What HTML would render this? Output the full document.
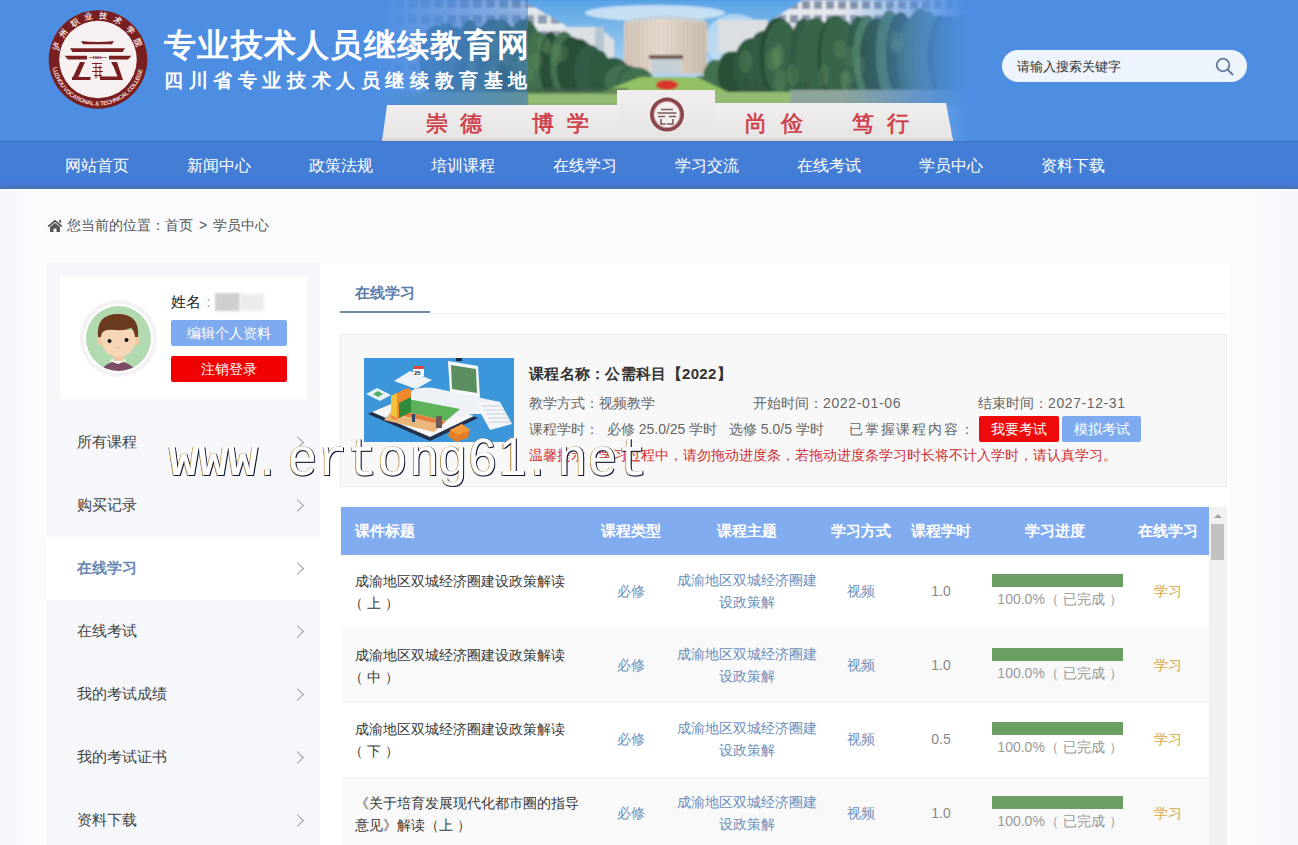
<!DOCTYPE html>
<html><head><meta charset="utf-8">
<style>
*{margin:0;padding:0;box-sizing:border-box}
html,body{text-spacing-trim:space-all;width:1298px;height:845px;overflow:hidden;font-family:"Liberation Sans",sans-serif;background:linear-gradient(90deg,#f6f8fc 0,#fafbfd 40px,#fafbfd 1240px,#f6f8fc 1298px);color:#333}
.abs{position:absolute}
#hdr{position:absolute;left:0;top:0;width:1298px;height:142px;background:#4d8ee3;overflow:hidden}
#nav{position:absolute;left:0;top:141px;width:1298px;height:48px;background:linear-gradient(#437dd6 0,#437dd6 76%,#437bdb 80%,#447ad8 87%,#4773c0 96%,#4d6fae 100%);border-top:1px solid #3a71c8}
#nav span{position:absolute;top:14px;color:#fff;font-size:16px;width:122px;text-align:center;line-height:20px}
.title{position:absolute;left:164px;top:25px;color:#fff;font-size:32px;font-weight:bold;letter-spacing:1.3px;line-height:40px;white-space:nowrap}
.sub{position:absolute;left:164px;top:68px;color:#fff;font-size:19px;font-weight:bold;letter-spacing:5.6px;line-height:26px;white-space:nowrap}
#search{position:absolute;left:1002px;top:50px;width:245px;height:32px;border-radius:16px;background:#eef4fc}
#search span{position:absolute;left:15px;top:9px;font-size:13px;color:#333;line-height:15px}
#crumb{position:absolute;left:67px;top:217px;font-size:14px;color:#555;line-height:17px;white-space:nowrap}
#side{position:absolute;left:47px;top:263px;width:273px;height:600px;background:#f5f7fb}
#card{position:absolute;left:13px;top:13px;width:247px;height:123px;background:#fff}
.menu{position:absolute;left:0;width:273px;height:63px}
.menu span{position:absolute;left:30px;top:22px;font-size:15px;color:#444;line-height:17px}
.menu i{position:absolute;left:246px;top:27px;width:9px;height:9px;border-right:1px solid #999;border-top:1px solid #999;transform:rotate(45deg)}
.menu.act{background:#fff}
.menu.act span{color:#6887b2;font-weight:bold}

#avatar{position:absolute;left:80px;top:300px;width:77px;height:77px;border-radius:50%;background:#fff;box-shadow:0 0 0 1px #f3eef3 inset}
.btn{position:absolute;height:26px;border-radius:2px;color:#fff;font-size:14px;text-align:center;line-height:26px}
#tab{position:absolute;left:355px;top:284px;font-size:15px;font-weight:bold;color:#5b7dab;line-height:18px}
#tabline{position:absolute;left:340px;top:310.5px;width:90px;height:2.5px;background:#6f8aa0}
#tabrule{position:absolute;left:430px;top:313px;width:797px;height:1px;background:#eeeff1}
#cbox{position:absolute;left:340px;top:334px;width:887px;height:153px;background:#f8f8f8;border:1px solid #ececec}
.ct{position:absolute;white-space:nowrap;font-size:14px;color:#666;line-height:16px}
#tbl{position:absolute;left:341px;top:507px;width:868px;height:340px;overflow:hidden}
#thead{position:absolute;left:0;top:0;width:868px;height:48px;background:#81acf0}
.th{position:absolute;top:15px;font-size:15px;font-weight:bold;color:#fff;line-height:18px;white-space:nowrap;text-align:center}
.row{position:absolute;left:0;width:868px;height:74px;background:#fff}
.row.g{background:#f9f9f9}
.td{position:absolute;font-size:14px;line-height:22px;white-space:nowrap;text-align:center}
.t1{left:14px;top:15px;color:#3a3a3a;text-align:left}
.t2{left:260px;width:60px;top:25px;color:#6d8fbd}
.t3{left:326px;width:160px;top:14px;color:#6d8fbd}
.t4{left:490px;width:60px;top:25px;color:#6d8fbd}
.t5{left:570px;width:60px;top:25px;color:#888}
.bar{position:absolute;left:651px;top:19px;width:131px;height:13px;background:#6a9e62}
.t6{left:644px;width:150px;top:33px;color:#999}
.t7{left:798px;width:58px;top:25px;color:#dba442}
#sb{position:absolute;left:1209px;top:507px;width:18px;height:340px;background:#f1f1f1}
#wm .c{display:inline-block;width:30.01px;font-family:"Liberation Sans",sans-serif}
#wm{position:absolute;left:169px;top:428px;font-family:"Liberation Mono",monospace;font-size:50px;color:#fff;white-space:nowrap;line-height:60px;text-shadow:1px 1px 0 #0a1430,-0.8px -0.8px 0 #d2a45a,0.8px -0.8px 0 #444,-0.8px 0.8px 0 #555;transform-origin:0 42px;transform:scaleY(1.08)}
</style></head><body>
<div id="hdr">
  <svg class="abs" style="left:0;top:0" width="1298" height="141" viewBox="0 0 1298 141">
    <defs>
      <linearGradient id="fadeR" x1="840" x2="968" y1="0" y2="0" gradientUnits="userSpaceOnUse">
        <stop offset="0" stop-color="#4d8ee3" stop-opacity="0"/>
        <stop offset="0.3" stop-color="#4d8ee3" stop-opacity="0.3"/>
        <stop offset="0.65" stop-color="#4d8ee3" stop-opacity="0.7"/>
        <stop offset="1" stop-color="#4d8ee3" stop-opacity="1"/>
      </linearGradient>
      <linearGradient id="fadeLb" x1="378" x2="528" y1="0" y2="0" gradientUnits="userSpaceOnUse">
        <stop offset="0" stop-color="#4d8ee3" stop-opacity="1"/>
        <stop offset="0.3" stop-color="#4a8ade" stop-opacity="0.85"/>
        <stop offset="0.7" stop-color="#4282d8" stop-opacity="0.65"/>
        <stop offset="1" stop-color="#3d7bd0" stop-opacity="0.5"/>
      </linearGradient>
      <linearGradient id="sky" x1="0" x2="0" y1="0" y2="1">
        <stop offset="0" stop-color="#58a3e4"/><stop offset="0.45" stop-color="#a6d0f0"/><stop offset="1" stop-color="#d6e8f5"/>
      </linearGradient>
      <linearGradient id="rb" x1="0" x2="1"><stop offset="0" stop-color="#c7b6a6"/><stop offset="0.45" stop-color="#ebe1d6"/><stop offset="1" stop-color="#b8a592"/></linearGradient>
      <linearGradient id="wall" x1="0" x2="0" y1="0" y2="1"><stop offset="0" stop-color="#f0eeee"/><stop offset="1" stop-color="#e6e3e3"/></linearGradient>
      <linearGradient id="treeG" x1="0" x2="0" y1="0" y2="1"><stop offset="0" stop-color="#4d7d55"/><stop offset="1" stop-color="#335c45"/></linearGradient>
      <pattern id="win" width="13" height="16" patternUnits="userSpaceOnUse" x="380" y="-4"><rect width="13" height="16" fill="#e2e6eb"/><rect x="2" y="3" width="9" height="9" fill="#8f9db0"/><rect x="0" y="12" width="13" height="2" fill="#f3f5f7"/></pattern>
      <pattern id="win2" width="12" height="14" patternUnits="userSpaceOnUse" x="764" y="-2"><rect width="12" height="14" fill="#e5e8ec"/><rect x="2" y="3" width="8" height="8" fill="#8693a6"/></pattern>
      <pattern id="vst" width="4" height="6" patternUnits="userSpaceOnUse"><rect x="0" width="3" height="6" fill="#e8ddd1" opacity="0.5"/><rect x="3" width="1" height="6" fill="#a89584" opacity="0.45"/></pattern>
      <filter id="bl" x="-5%" y="-5%" width="110%" height="110%"><feGaussianBlur stdDeviation="1.3"/></filter>
      <clipPath id="pc"><rect x="360" y="0" width="620" height="141"/></clipPath>
      <filter id="bl2"><feGaussianBlur stdDeviation="0.6"/></filter>
    </defs>
    <g clip-path="url(#pc)"><g filter="url(#bl)">
      <rect x="375" y="0" width="600" height="141" fill="url(#sky)"/>
      <ellipse cx="655" cy="13" rx="70" ry="8" fill="#e6f0f8" opacity="0.75"/>
      <ellipse cx="735" cy="40" rx="30" ry="26" fill="#cfe3f3" opacity="0.7"/>
      <polygon points="375,0 522,0 566,26 566,80 375,80" fill="url(#win)"/>
      <polygon points="565,27 598,27 614,40 614,72 565,72" fill="#dcdfe3"/>
      <rect x="595" y="27" width="9" height="40" fill="#b4c6d2"/>
      <path d="M624,22 Q665,12 707,22 L707,74 L624,74Z" fill="url(#rb)"/>
      <path d="M624,22 Q665,12 707,22 L707,74 L624,74Z" fill="url(#vst)"/>
      <path d="M626,20 Q665,11 705,20 L705,23 Q665,15 626,23Z" fill="#c3d0d8"/>
      <rect x="718" y="20" width="50" height="32" fill="#dcdfe2"/>
      <polygon points="764,25 803,0 975,0 975,40 764,40" fill="url(#win2)"/>
      <rect x="651" y="58" width="30" height="16" fill="#c5d0d6"/>
      <rect x="649" y="55" width="34" height="4" fill="#6e5248"/>
      <g><polygon points="430,97 430,32.0 435,32.0 440,32.0 445,32.0 450,32.0 455,32.0 460,32.0 465,32.0 470,32.0 475,32.0 480,32.0 485,32.0 490,32.0 495,32.0 500,32.0 505,32.0 510,32.0 515,32.0 520,32.0 525,32.0 530,36.4 535,37.4 540,38.4 545,39.4 550,40.4 555,41.4 560,44.0 565,46.0 570,48.0 575,50.0 580,52.0 585,54.0 590,56.0 595,58.0 600,62.0 605,63.8 610,65.5 615,67.2 620,69.0 625,70.8 630,72.5 635,74.2 640,76.0 645,77.8 645,97" fill="#345e46"/><polygon points="700,97 700,82.0 705,78.5 710,75.0 715,71.5 720,68.0 725,64.5 730,61.0 735,57.5 740,54.0 745,51.0 750,48.0 755,45.0 760,42.0 765,39.0 770,36.0 775,33.0 780,30.0 785,29.8 790,29.5 795,29.2 800,29.0 805,28.8 810,28.5 815,28.2 820,28.0 825,27.8 830,27.5 835,27.2 840,27.0 845,26.8 850,26.5 855,26.2 860,26.0 865,25.8 870,25.5 875,25.2 880,25.0 885,24.8 890,24.5 895,24.2 900,24.0 905,23.8 910,23.5 915,23.2 920,23.0 925,22.8 930,22.5 935,22.2 940,22.0 945,21.8 950,21.5 955,21.2 960,21.0 965,20.8 965,97" fill="#345e46"/><ellipse cx="436.1" cy="60.7" rx="17.4" ry="36.3" fill="#2b5039"/><ellipse cx="446.1" cy="59.7" rx="17.7" ry="37.3" fill="#39654a"/><ellipse cx="455.9" cy="61.5" rx="11.9" ry="35.5" fill="#325c45"/><ellipse cx="467.8" cy="58.9" rx="11.8" ry="38.1" fill="#39654a"/><ellipse cx="469.2" cy="58.1" rx="13.2" ry="38.9" fill="#325c45"/><ellipse cx="480.4" cy="61.0" rx="12.1" ry="36.0" fill="#4b7a55"/><ellipse cx="493.0" cy="57.7" rx="18.8" ry="39.3" fill="#2f5a40"/><ellipse cx="500.5" cy="58.1" rx="18.9" ry="38.9" fill="#39654a"/><ellipse cx="511.0" cy="61.8" rx="15.3" ry="35.2" fill="#2b5039"/><ellipse cx="524.1" cy="57.9" rx="18.7" ry="39.1" fill="#39654a"/><ellipse cx="537.2" cy="64.4" rx="13.4" ry="32.6" fill="#437150"/><ellipse cx="541.6" cy="65.0" rx="13.1" ry="32.0" fill="#437150"/><ellipse cx="550.2" cy="64.2" rx="11.0" ry="32.8" fill="#2b5039"/><ellipse cx="564.0" cy="64.1" rx="13.8" ry="32.9" fill="#437150"/><ellipse cx="571.5" cy="66.9" rx="14.8" ry="30.1" fill="#2b5039"/><ellipse cx="578.3" cy="67.9" rx="18.5" ry="29.1" fill="#2b5039"/><ellipse cx="589.9" cy="71.0" rx="15.4" ry="26.0" fill="#325c45"/><ellipse cx="599.7" cy="73.8" rx="11.1" ry="23.2" fill="#2f5a40"/><ellipse cx="612.8" cy="77.4" rx="18.6" ry="19.6" fill="#2f5a40"/><ellipse cx="623.1" cy="80.7" rx="18.5" ry="16.3" fill="#437150"/><ellipse cx="630.5" cy="81.8" rx="13.0" ry="15.2" fill="#325c45"/><ellipse cx="636.3" cy="82.1" rx="17.4" ry="14.9" fill="#437150"/><ellipse cx="700.4" cy="86.6" rx="11.7" ry="10.4" fill="#437150"/><ellipse cx="715.4" cy="78.4" rx="12.2" ry="18.6" fill="#437150"/><ellipse cx="729.8" cy="74.3" rx="13.5" ry="22.7" fill="#437150"/><ellipse cx="733.7" cy="74.2" rx="16.0" ry="22.8" fill="#2b5039"/><ellipse cx="747.8" cy="70.6" rx="12.3" ry="26.4" fill="#2f5a40"/><ellipse cx="751.8" cy="67.5" rx="18.4" ry="29.5" fill="#2f5a40"/><ellipse cx="763.6" cy="63.9" rx="17.6" ry="33.1" fill="#325c45"/><ellipse cx="778.0" cy="57.3" rx="18.8" ry="39.7" fill="#2b5039"/><ellipse cx="781.9" cy="58.4" rx="17.7" ry="38.6" fill="#39654a"/><ellipse cx="801.7" cy="58.3" rx="12.1" ry="38.7" fill="#325c45"/><ellipse cx="803.0" cy="57.6" rx="12.2" ry="39.4" fill="#325c45"/><ellipse cx="815.1" cy="57.4" rx="19.0" ry="39.6" fill="#39654a"/><ellipse cx="832.3" cy="57.0" rx="14.9" ry="40.0" fill="#2b5039"/><ellipse cx="835.7" cy="56.0" rx="14.8" ry="41.0" fill="#39654a"/><ellipse cx="843.8" cy="58.5" rx="15.3" ry="38.5" fill="#39654a"/><ellipse cx="859.3" cy="56.5" rx="13.7" ry="40.5" fill="#2f5a40"/><ellipse cx="868.1" cy="56.4" rx="15.4" ry="40.6" fill="#4b7a55"/><ellipse cx="877.0" cy="57.5" rx="17.2" ry="39.5" fill="#2b5039"/><ellipse cx="889.4" cy="53.4" rx="13.4" ry="43.6" fill="#4b7a55"/><ellipse cx="900.8" cy="54.4" rx="14.9" ry="42.6" fill="#2b5039"/><ellipse cx="911.1" cy="57.5" rx="13.7" ry="39.5" fill="#39654a"/><ellipse cx="920.0" cy="52.6" rx="15.4" ry="44.4" fill="#437150"/><ellipse cx="927.6" cy="53.7" rx="13.3" ry="43.3" fill="#4b7a55"/><ellipse cx="941.0" cy="56.0" rx="13.8" ry="41.0" fill="#2b5039"/><ellipse cx="948.1" cy="56.5" rx="14.3" ry="40.5" fill="#39654a"/><ellipse cx="963.7" cy="54.8" rx="18.8" ry="42.2" fill="#437150"/></g><g><ellipse cx="543.6" cy="44.3" rx="6.6" ry="8.8" fill="#6a9462" opacity="0.3"/><ellipse cx="839.8" cy="49.2" rx="6.6" ry="9.8" fill="#6a9462" opacity="0.3"/><ellipse cx="494.1" cy="42.5" rx="6.0" ry="9.2" fill="#6a9462" opacity="0.3"/><ellipse cx="483.8" cy="81.4" rx="4.5" ry="11.9" fill="#6a9462" opacity="0.3"/><ellipse cx="523.1" cy="62.7" rx="6.7" ry="8.2" fill="#6a9462" opacity="0.3"/><ellipse cx="793.0" cy="75.2" rx="6.1" ry="11.3" fill="#6a9462" opacity="0.3"/><ellipse cx="893.6" cy="39.5" rx="5.0" ry="9.7" fill="#6a9462" opacity="0.3"/><ellipse cx="556.2" cy="54.7" rx="5.9" ry="11.1" fill="#6a9462" opacity="0.3"/><ellipse cx="745.6" cy="61.5" rx="6.9" ry="11.8" fill="#6a9462" opacity="0.3"/><ellipse cx="561.7" cy="52.9" rx="6.7" ry="8.6" fill="#6a9462" opacity="0.3"/><ellipse cx="778.6" cy="55.2" rx="5.5" ry="11.9" fill="#6a9462" opacity="0.3"/><ellipse cx="847.5" cy="80.2" rx="5.8" ry="11.6" fill="#6a9462" opacity="0.3"/><ellipse cx="896.6" cy="46.8" rx="6.8" ry="7.1" fill="#6a9462" opacity="0.3"/><ellipse cx="501.5" cy="57.4" rx="5.9" ry="7.6" fill="#6a9462" opacity="0.3"/><ellipse cx="528.7" cy="73.9" rx="5.6" ry="7.1" fill="#6a9462" opacity="0.3"/><ellipse cx="494.8" cy="46.5" rx="4.5" ry="8.3" fill="#6a9462" opacity="0.3"/><ellipse cx="772.8" cy="59.4" rx="6.6" ry="11.3" fill="#6a9462" opacity="0.3"/><ellipse cx="507.2" cy="56.8" rx="6.2" ry="8.8" fill="#6a9462" opacity="0.3"/><ellipse cx="823.6" cy="75.4" rx="5.4" ry="11.2" fill="#6a9462" opacity="0.3"/><ellipse cx="849.5" cy="56.9" rx="4.9" ry="10.8" fill="#6a9462" opacity="0.3"/><ellipse cx="860.2" cy="65.5" rx="4.9" ry="9.4" fill="#6a9462" opacity="0.3"/><ellipse cx="845.1" cy="80.7" rx="5.3" ry="9.7" fill="#6a9462" opacity="0.3"/><ellipse cx="548.3" cy="47.6" rx="4.2" ry="7.4" fill="#6a9462" opacity="0.3"/><ellipse cx="779.9" cy="81.0" rx="6.1" ry="12.0" fill="#6a9462" opacity="0.3"/><ellipse cx="449.8" cy="63.9" rx="4.3" ry="11.1" fill="#6a9462" opacity="0.3"/><ellipse cx="898.9" cy="42.0" rx="5.2" ry="10.1" fill="#6a9462" opacity="0.3"/><ellipse cx="472.2" cy="61.1" rx="6.2" ry="10.3" fill="#6a9462" opacity="0.3"/><ellipse cx="496.0" cy="69.9" rx="4.4" ry="11.4" fill="#6a9462" opacity="0.3"/><ellipse cx="776.6" cy="58.0" rx="5.1" ry="11.7" fill="#6a9462" opacity="0.3"/><ellipse cx="451.2" cy="61.7" rx="4.9" ry="10.4" fill="#6a9462" opacity="0.3"/><ellipse cx="490.8" cy="73.0" rx="5.4" ry="11.3" fill="#6a9462" opacity="0.3"/><ellipse cx="517.8" cy="65.8" rx="6.0" ry="7.4" fill="#6a9462" opacity="0.3"/><ellipse cx="536.1" cy="60.5" rx="6.5" ry="8.9" fill="#6a9462" opacity="0.3"/></g><g><rect x="633.9" y="82" width="1.5" height="14" fill="#3b3f3a" opacity="0.5"/><rect x="735.1" y="82" width="1.5" height="14" fill="#3b3f3a" opacity="0.5"/><rect x="745.2" y="82" width="1.5" height="14" fill="#3b3f3a" opacity="0.5"/><rect x="762.3" y="82" width="1.5" height="14" fill="#3b3f3a" opacity="0.5"/><rect x="847.0" y="82" width="1.5" height="14" fill="#3b3f3a" opacity="0.5"/><rect x="850.1" y="82" width="1.5" height="14" fill="#3b3f3a" opacity="0.5"/><rect x="864.8" y="82" width="1.5" height="14" fill="#3b3f3a" opacity="0.5"/><rect x="635.7" y="82" width="1.5" height="14" fill="#3b3f3a" opacity="0.5"/><rect x="595.2" y="82" width="1.5" height="14" fill="#3b3f3a" opacity="0.5"/><rect x="573.5" y="82" width="1.5" height="14" fill="#3b3f3a" opacity="0.5"/><rect x="755.2" y="82" width="1.5" height="14" fill="#3b3f3a" opacity="0.5"/><rect x="806.6" y="82" width="1.5" height="14" fill="#3b3f3a" opacity="0.5"/><rect x="804.6" y="82" width="1.5" height="14" fill="#3b3f3a" opacity="0.5"/><rect x="565.6" y="82" width="1.5" height="14" fill="#3b3f3a" opacity="0.5"/><rect x="748.6" y="82" width="1.5" height="14" fill="#3b3f3a" opacity="0.5"/><rect x="876.4" y="82" width="1.5" height="14" fill="#3b3f3a" opacity="0.5"/></g>
      <polygon points="380,92 965,92 965,106 380,106" fill="#7fa866"/>
      <polygon points="640,77 697,77 728,92 602,92" fill="#93c062"/>
      <ellipse cx="667" cy="85" rx="11" ry="5" fill="#d8342e"/>
      <rect x="528" y="92" width="300" height="12" fill="#93bb73"/><rect x="790" y="90" width="175" height="14" fill="#8ea49a"/><rect x="528" y="88" width="100" height="6" fill="#40604a" opacity="0.6"/>
    </g></g>
    <rect x="360" y="0" width="168" height="106" fill="url(#fadeLb)"/><rect x="360" y="104" width="30" height="37" fill="#4d8ee3"/>
    <rect x="840" y="0" width="180" height="141" fill="url(#fadeR)"/>
        <g filter="url(#bl2)">
    <polygon points="387,105 617,105 617,141 382,141" fill="url(#wall)"/>
    <rect x="617" y="90" width="98" height="51" fill="url(#wall)"/>
    <polygon points="715,103 946,103 953,141 715,141" fill="url(#wall)"/>
    <polygon points="382.5,138 953,138 953.5,141 382,141" fill="#d9d6d6"/>
    <circle cx="667" cy="114.6" r="17" fill="#8b4448"/>
    <circle cx="667" cy="114.6" r="13.5" fill="#c79aa0"/>
    <circle cx="667" cy="114.6" r="12.5" fill="#f4f0ef"/>
    <path d="M661 109.5h12M657.5 113h19M658 116.5h7M669 116.5h7M661 119v5h5M673 119v5h-6" stroke="#7e5a5e" stroke-width="1.6" fill="none"/>
    </g>
    <g fill="#cf3b46" stroke="#cf3b46" stroke-width="0.6" font-size="22" font-family="Liberation Serif, serif">
      <text x="426" y="131">崇</text><text x="460" y="131">德</text>
      <text x="532" y="131">博</text><text x="567" y="131">学</text>
      <text x="745" y="131">尚</text><text x="781" y="131">俭</text>
      <text x="852" y="131">笃</text><text x="887" y="131">行</text>
    </g>
    <g transform="translate(98,59.5)">
      <defs>
        <path id="arcT" d="M-40.1,-8.5 A41,41 0 0,1 40.1,-8.5"/>
        <path id="arcB" d="M-45.3,8 A46,46 0 0,0 45.3,8"/>
      </defs>
      <circle r="49.3" fill="#7a1f1f"/>
      <circle r="38.8" fill="#f7f2f1"/>
      <text font-size="8" font-weight="bold" fill="#f3e3df" font-family="Liberation Serif"><textPath href="#arcT" textLength="108" lengthAdjust="spacing">泸州职业技术学院</textPath></text>
      <text font-size="6" font-weight="bold" fill="#f0dcd8" font-family="Liberation Sans"><textPath href="#arcB" textLength="126" lengthAdjust="spacing">LUZHOU VOCATIONAL &amp; TECHNICAL COLLEGE</textPath></text>
      <g fill="#7a1f1f">
        <path d="M-17,-18.5 Q0,-16.5 16,-18.5 L14,-15.3 L-15,-15.3Z"/>
        <path d="M-28,-11.2 L27,-11.2 L24.5,-7.5 L-25.5,-7.5Z"/>
        <path d="M-33.5,-3.8 L-11,-3.8 L-11,0 L-30,0Z"/>
        <path d="M11,-3.8 L33.5,-3.8 L30,0 L11,0Z"/>
        <path d="M-18,2.5 L-13,2.5 L-20,18.5 L-25.5,18.5Z"/>
        <path d="M-26,17.5 L-7.5,17.5 L-7.5,20.5 L-26,20.5Z"/>
        <path d="M13,2.5 L19,2.5 L25,20.5 L2,20.5 L2,17 L19.5,17 L15.5,7Z"/>
      </g>
      <path d="M-9,-2 h18" stroke="#7a1f1f" stroke-width="0.6"/>
      <text x="-5.5" y="-0.3" font-size="4" fill="#7a1f1f" font-family="Liberation Sans" font-weight="bold">1961</text>
      <path d="M-6,4 h10 M-5,8 h9 M-6,12 h11 M-4,16 h8 M-2,3 v16 M2,6 v12" stroke="#7a1f1f" stroke-width="1" fill="none"/>
    </g>
  </svg>
  <div class="title">专业技术人员继续教育网</div>
  <div class="sub">四川省专业技术人员继续教育基地</div>
  <div id="search"><span>请输入搜索关键字</span><svg class="abs" style="left:212px;top:6px" width="22" height="22" viewBox="0 0 22 22"><circle cx="9" cy="9" r="6.3" fill="none" stroke="#5d7a9c" stroke-width="1.8"/><path d="M13.6 13.6 L18.5 18.5" stroke="#5d7a9c" stroke-width="2" stroke-linecap="round"/></svg></div>
</div>
<div id="nav">
  <span style="left:36px">网站首页</span>
  <span style="left:158px">新闻中心</span>
  <span style="left:280px">政策法规</span>
  <span style="left:402px">培训课程</span>
  <span style="left:524px">在线学习</span>
  <span style="left:646px">学习交流</span>
  <span style="left:768px">在线考试</span>
  <span style="left:890px">学员中心</span>
  <span style="left:1012px">资料下载</span>
</div>
<svg class="abs" style="left:47px;top:219px" width="16" height="14" viewBox="0 0 16 14"><path d="M0.5 7 L8 0.8 L15.5 7 L14.3 8.3 L8 3.1 L1.7 8.3Z M12 1 h2 v3.5 l-2 -1.7Z" fill="#555"/><path d="M3 8 L8 4 L13 8 V13 H9.5 V9.5 H6.5 V13 H3Z" fill="#555"/></svg>
<div class="abs" style="left:320px;top:264px;width:910px;height:600px;background:#fff"></div>
<div id="crumb">您当前的位置：首页 <span style="margin:0 2px">&gt;</span> 学员中心</div>
<div id="side">
  <div id="card"></div>
  <div class="menu" style="top:148px"><span>所有课程</span><i></i></div>
  <div class="menu" style="top:211px"><span>购买记录</span><i></i></div>
  <div class="menu act" style="top:274px"><span>在线学习</span><i></i></div>
  <div class="menu" style="top:337px"><span>在线考试</span><i></i></div>
  <div class="menu" style="top:400px"><span>我的考试成绩</span><i></i></div>
  <div class="menu" style="top:463px"><span>我的考试证书</span><i></i></div>
  <div class="menu" style="top:526px"><span>资料下载</span><i></i></div>
</div>

<div id="avatar">
  <svg width="77" height="77" viewBox="0 0 77 77">
    <defs><clipPath id="ac"><circle cx="38.5" cy="38.5" r="32.5"/></clipPath></defs>
    <circle cx="38.5" cy="38.5" r="36" fill="#fff" stroke="#f3f1f4" stroke-width="2.5"/>
    <circle cx="38.5" cy="38.5" r="32.5" fill="#b2dab0"/>
    <g clip-path="url(#ac)">
      <path d="M19 76 Q21 63 38 61 Q55 63 58 76Z" fill="#7a4c66"/>
      <path d="M30 61 L38 64 L46 61 L44 59 L32 59Z" fill="#fff"/>
      <rect x="33" y="52" width="11" height="9" fill="#f0c8a2"/>
    </g>
    <ellipse cx="20.5" cy="41" rx="3.2" ry="4.2" fill="#f0c8a2"/>
    <ellipse cx="56.5" cy="41" rx="3.2" ry="4.2" fill="#f0c8a2"/>
    <path d="M20.5 30 Q20 57 38.5 57 Q57 57 56 30Z" fill="#f7d6b6"/>
    <path d="M18 37 Q16 14 38 14 Q60 14 58 37 L55 37 Q54 30 51 28 Q44 31 36 30 Q28 29 24 31 Q21 33 21 37Z" fill="#6c3a1d"/>
    <circle cx="29.5" cy="41" r="2" fill="#111"/>
    <circle cx="46.5" cy="40" r="2" fill="#111"/>
    <path d="M37 47 Q38.5 48 40 47" stroke="#e6a98b" stroke-width="1" fill="none"/>
  </svg>
</div>
<div class="ct" style="left:171px;top:293px;font-size:15px;color:#222;line-height:17px">姓名<span style="color:#aaa">：</span></div>
<div class="abs" style="left:215px;top:293px;width:25px;height:18px;background:#cfcfcf;filter:blur(1px)"></div>
<div class="abs" style="left:240px;top:294px;width:24px;height:17px;background:#ececec;filter:blur(1.5px)"></div>
<div class="btn" style="left:171px;top:320px;width:116px;background:#7eaaf0">编辑个人资料</div>
<div class="btn" style="left:171px;top:356px;width:116px;background:#f00000">注销登录</div>

<div id="tab">在线学习</div>
<div id="tabline"></div>
<div id="tabrule"></div>
<div id="cbox"></div>
<svg class="abs" style="left:364px;top:358px" width="150" height="84" viewBox="0 0 150 84">
  <rect width="150" height="84" fill="#3b97d9"/>
  <polygon points="2,36 13,30 27,37 16,43" fill="#e9f1f8"/>
  <polygon points="9,36 14,33 19,36 14,39" fill="#4fb06a"/>
  <polygon points="30,23 46,13 68,22 52,31" fill="#eef3f8"/>
  <rect x="49" y="9" width="11" height="9" fill="#fff"/><rect x="49" y="8" width="11" height="3" fill="#e0453a"/>
  <text x="50" y="17" font-size="6" font-weight="bold" fill="#222" font-family="Liberation Sans">25</text>
  <polygon points="4,56 52,34 114,60 66,83" fill="#23304a"/>
  <polygon points="8,54 52,35 110,58 66,79" fill="#f4f6f8"/>
  <path d="M44,36 Q50,28 70,30 L136,44 L120,56 L100,56 L100,60 L60,46 Z" fill="#eef1f5"/>
  <polygon points="44,41 96,51 82,63 30,51" fill="#5db25a"/>
  <polygon points="30,51 82,63 78,67 26,55" fill="#e27d3c"/>
  <polygon points="26,55 78,67 70,74 20,62" fill="#eab77b"/>
  <polygon points="27,38 43,30 47,32 47,54 31,62 27,60" fill="#f08a2c"/>
  <polygon points="27,38 33,35 33,60 27,57" fill="#f3c13a"/>
  <polygon points="35,45 47,39 47,54 35,60" fill="#2f8a3e"/>
  <polygon points="84,3 114,8 116,40 86,34" fill="#f7f8fa"/>
  <polygon points="87,7 112,11 113,35 88,31" fill="#5c8f5f"/>
  <rect x="92" y="0" width="6" height="3" fill="#1d2433"/>
  <polygon points="113,44 136,44 148,66 126,72 116,54" fill="#f3f5f8"/>
  <path d="M118,48h19M120,52h20M122,56h21M124,60h21M125,64h21" stroke="#c9d0d8" stroke-width="1"/>
  <polygon points="86,72 98,66 106,72 104,80 92,84 84,78" fill="#e07d26"/>
  <polygon points="86,72 98,66 106,72 94,77" fill="#f29a3c"/>
  <rect x="72" y="58" width="6" height="12" fill="#6b5a56"/>
  <rect x="48" y="56" width="3" height="8" fill="#2d4866"/>
</svg>
<div class="ct" style="left:529px;top:365px;font-size:15px;font-weight:bold;color:#333;line-height:18px;letter-spacing:0.3px">课程名称：公需科目【2022】</div>
<div class="ct" style="left:529px;top:395px">教学方式：视频教学</div>
<div class="ct" style="left:753px;top:395px">开始时间：<span style="letter-spacing:0.65px">2022-01-06</span></div>
<div class="ct" style="left:978px;top:395px">结束时间：<span style="letter-spacing:0.6px">2027-12-31</span></div>
<div class="ct" style="left:529px;top:421px">课程学时：&nbsp; 必修&nbsp;25.0/25&nbsp;学时&nbsp;&nbsp; 选修&nbsp;5.0/5&nbsp;学时</div>
<div class="ct" style="left:849px;top:421px;letter-spacing:1.8px">已掌握课程内容：</div>
<div class="btn" style="left:979px;top:416px;width:80px;background:#ee0a0a">我要考试</div>
<div class="btn" style="left:1062px;top:416px;width:79px;background:#7eaaef">模拟考试</div>
<div class="ct" style="left:529px;top:447px;color:#cf2e2e">温馨提示：学习过程中，请勿拖动进度条，若拖动进度条学习时长将不计入学时，请认真学习。</div>

<div id="tbl">
  <div id="thead">
    <span class="th" style="left:14px">课件标题</span>
    <span class="th" style="left:260px;width:60px">课程类型</span>
    <span class="th" style="left:376px;width:60px">课程主题</span>
    <span class="th" style="left:490px;width:60px">学习方式</span>
    <span class="th" style="left:570px;width:60px">课程学时</span>
    <span class="th" style="left:684px;width:60px">学习进度</span>
    <span class="th" style="left:797px;width:60px">在线学习</span>
  </div>
  <div class="row" style="top:48px">
    <div class="td t1">成渝地区双城经济圈建设政策解读<br><span style="margin-left:-6px">（ 上 ）</span></div>
    <div class="td t2">必修</div><div class="td t3">成渝地区双城经济圈建<br>设政策解</div>
    <div class="td t4">视频</div><div class="td t5">1.0</div>
    <div class="bar"></div><div class="td t6">100.0%（ 已完成 ）</div><div class="td t7">学习</div>
  </div>
  <div class="row g" style="top:122px">
    <div class="td t1">成渝地区双城经济圈建设政策解读<br><span style="margin-left:-6px">（ 中 ）</span></div>
    <div class="td t2">必修</div><div class="td t3">成渝地区双城经济圈建<br>设政策解</div>
    <div class="td t4">视频</div><div class="td t5">1.0</div>
    <div class="bar"></div><div class="td t6">100.0%（ 已完成 ）</div><div class="td t7">学习</div>
  </div>
  <div class="row" style="top:196px">
    <div class="td t1">成渝地区双城经济圈建设政策解读<br><span style="margin-left:-6px">（ 下 ）</span></div>
    <div class="td t2">必修</div><div class="td t3">成渝地区双城经济圈建<br>设政策解</div>
    <div class="td t4">视频</div><div class="td t5">0.5</div>
    <div class="bar"></div><div class="td t6">100.0%（ 已完成 ）</div><div class="td t7">学习</div>
  </div>
  <div class="row g" style="top:270px">
    <div class="td t1">《关于培育发展现代化都市圈的指导<br>意见》解读（上<span style="margin-left:4px">）</span></div>
    <div class="td t2">必修</div><div class="td t3">成渝地区双城经济圈建<br>设政策解</div>
    <div class="td t4">视频</div><div class="td t5">1.0</div>
    <div class="bar"></div><div class="td t6">100.0%（ 已完成 ）</div><div class="td t7">学习</div>
  </div>
</div>
<div id="sb">
  <svg width="18" height="60"><path d="M5 11 L9 7 L13 11Z" fill="#a3a3a3"/><rect x="2" y="17" width="13" height="36" fill="#c1c1c1"/></svg>
</div>
<div id="wm"><b style="letter-spacing:-0.5px">www</b><span class="c" style="margin-left:-5px;margin-right:5px;text-align:center">.</span>erto<span style="margin-left:2px;margin-right:-2px">n</span>g6<span class="c" style="text-align:center">1</span><span class="c" style="text-align:left;padding-left:3px">.</span>net</div>
</body></html>
